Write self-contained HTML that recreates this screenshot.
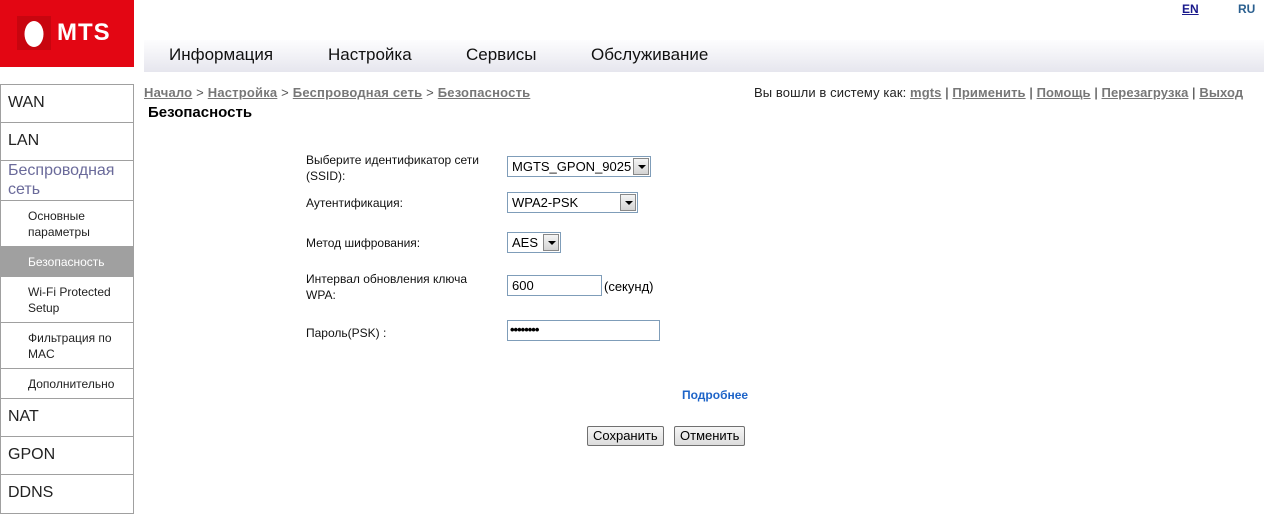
<!DOCTYPE html>
<html><head><meta charset="utf-8"><style>
*{margin:0;padding:0;box-sizing:border-box}
body{width:1264px;height:516px;background:#fff;font-family:"Liberation Sans",sans-serif;position:relative;overflow:hidden;color:#000}
.abs{position:absolute}
#logo{left:0;top:0;width:134px;height:67px;background:#e30613}
#nav{left:144px;top:40px;width:1120px;height:32px;background:linear-gradient(#fdfdfe,#e6e6ee)}
#nav span{position:absolute;top:5px;font-size:17px;color:#111}
.side{left:0;width:134px;border:1px solid #a0a0a0;border-bottom:none;background:#fff}
.big{font-size:16px;color:#222;padding-left:7px}
.sm{font-size:12px;color:#222;padding-left:27px;line-height:16px}
a{color:#777;font-weight:bold;text-decoration:underline}
.lbl{font-size:12px;color:#111;line-height:16px}
.sel{border:1px solid #7f9db9;height:21px;font-size:13px;padding:2px 4px;background:#fff}
.arr{position:absolute;right:1px;top:1px;width:16px;height:17px;background:linear-gradient(#f4f4f4,#d4d4d4);border:1px solid #888}
.arr:after{content:"";position:absolute;left:4px;top:6px;border:4px solid transparent;border-top:4px solid #000}
.btn{font-size:13px;border:1px solid #707070;border-radius:2px;background:linear-gradient(#f6f6f6,#dcdcdc);height:20px;padding:1px 5px}
</style></head><body>
<div class="abs" id="logo">
<div class="abs" style="left:17px;top:16px;width:34px;height:34px;background:#c8050f"></div>
<svg class="abs" style="left:17px;top:16px" width="34" height="34"><ellipse cx="17" cy="18" rx="9.5" ry="13" fill="#fff"/></svg>
<div class="abs" style="left:57px;top:19px;color:#fff;font-weight:bold;font-size:24px;letter-spacing:1px">MTS</div>
</div>
<div class="abs" style="left:1182px;top:2px;font-size:12px;font-weight:bold;color:#1a1a8c;text-decoration:underline">EN</div>
<div class="abs" style="left:1238px;top:2px;font-size:12px;font-weight:bold;color:#2a5f8f">RU</div>
<div class="abs" id="nav"><span style="left:25px">Информация</span><span style="left:184px">Настройка</span><span style="left:322px">Сервисы</span><span style="left:447px">Обслуживание</span></div>

<div class="abs side big" style="top:84px;height:38px;line-height:36px">WAN</div>
<div class="abs side big" style="top:122px;height:38px;line-height:36px">LAN</div>
<div class="abs side big" style="top:160px;height:40px;line-height:19px;color:#6a6a9a">Беспроводная сеть</div>
<div class="abs side sm" style="top:200px;height:46px;padding-top:7px">Основные параметры</div>
<div class="abs side sm" style="top:246px;height:30px;padding-top:7px;background:#a0a0a0;color:#fff">Безопасность</div>
<div class="abs side sm" style="top:276px;height:46px;padding-top:7px">Wi-Fi Protected Setup</div>
<div class="abs side sm" style="top:322px;height:46px;padding-top:7px">Фильтрация по MAC</div>
<div class="abs side sm" style="top:368px;height:30px;padding-top:7px">Дополнительно</div>
<div class="abs side big" style="top:398px;height:38px;line-height:36px">NAT</div>
<div class="abs side big" style="top:436px;height:38px;line-height:36px">GPON</div>
<div class="abs side big" style="top:474px;height:40px;line-height:36px;border-bottom:1px solid #a0a0a0">DDNS</div>

<div class="abs" style="left:144px;top:85px;font-size:13px;color:#555;letter-spacing:0.2px"><a>Начало</a> &gt; <a>Настройка</a> &gt; <a>Беспроводная сеть</a> &gt; <a>Безопасность</a></div>
<div class="abs" style="left:148px;top:104px;font-size:15px;font-weight:bold">Безопасность</div>
<div class="abs" style="left:754px;top:85px;font-size:13px;color:#222;letter-spacing:0.1px">Вы вошли в систему как: <a>mgts</a> | <a>Применить</a> | <a>Помощь</a> | <a>Перезагрузка</a> | <a>Выход</a></div>

<div class="abs lbl" style="left:306px;top:152px">Выберите идентификатор сети<br>(SSID):</div>
<div class="abs sel" style="left:507px;top:156px;width:144px">MGTS_GPON_9025<div class="arr"></div></div>
<div class="abs lbl" style="left:306px;top:195px">Аутентификация:</div>
<div class="abs sel" style="left:507px;top:192px;width:131px">WPA2-PSK<div class="arr"></div></div>
<div class="abs lbl" style="left:306px;top:235px">Метод шифрования:</div>
<div class="abs sel" style="left:507px;top:232px;width:54px">AES<div class="arr"></div></div>
<div class="abs lbl" style="left:306px;top:271px">Интервал обновления ключа<br>WPA:</div>
<div class="abs sel" style="left:507px;top:275px;width:95px">600</div>
<div class="abs" style="left:604px;top:279px;font-size:13px">(секунд)</div>
<div class="abs lbl" style="left:306px;top:325px">Пароль(PSK) :</div>
<div class="abs sel" style="left:507px;top:320px;width:153px;font-size:13px;line-height:14px;font-weight:bold;padding-left:2px;letter-spacing:-1px">••••••••</div>
<div class="abs" style="left:682px;top:388px;font-size:12px;font-weight:bold;color:#1e64c8">Подробнее</div>
<div class="abs btn" style="left:587px;top:426px">Сохранить</div>
<div class="abs btn" style="left:674px;top:426px">Отменить</div>
</body></html>
